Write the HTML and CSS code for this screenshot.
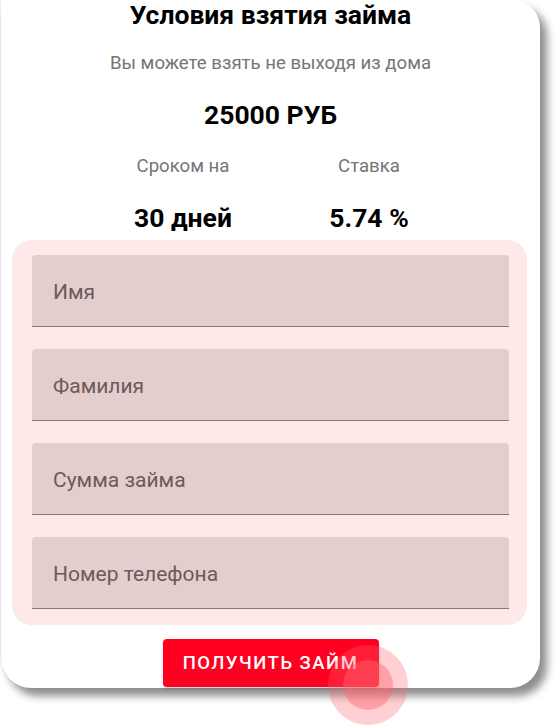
FILE: index.html
```html
<!DOCTYPE html>
<html lang="ru">
<head>
<meta charset="utf-8">
<link rel="stylesheet" href="styles.css">
</head>
<body>
<div class="card">
  <h1 class="title">Условия взятия займа</h1>
  <p class="subtitle">Вы можете взять не выходя из дома</p>
  <div class="amount">25000 РУБ</div>
  <div class="stats">
    <div class="stat">
      <div class="stat-label">Сроком на</div>
      <div class="stat-value">30 дней</div>
    </div>
    <div class="stat">
      <div class="stat-label">Ставка</div>
      <div class="stat-value">5.74 %</div>
    </div>
  </div>
  <form class="panel">
    <div class="field"><span class="placeholder">Имя</span></div>
    <div class="field"><span class="placeholder">Фамилия</span></div>
    <div class="field"><span class="placeholder">Сумма займа</span></div>
    <div class="field"><span class="placeholder">Номер телефона</span></div>
  </form>
  <div class="actions">
    <button type="button" class="btn">Получить займ</button>
    <span class="ripple"><span class="ripple-inner"></span></span>
  </div>
</div>
</body>
</html>
```
FILE: styles.css
```css
html, body {
  margin: 0;
  padding: 0;
  background: #ffffff;
}
body {
  font-family: Roboto, "Noto Sans", sans-serif;
  height: 725px;
  overflow: hidden;
}
.card {
  width: 539px;
  margin: 0 0 0 1px;
  padding: 0 0 1px;
  box-sizing: border-box;
  background: #ffffff;
  border-radius: 0 27px 30px 30px;
  box-shadow: 7px 8px 8px rgba(0, 0, 0, 0.45), -1px 0 1px rgba(0, 0, 0, 0.08);
  display: flex;
  flex-direction: column;
  align-items: center;
}
.title {
  margin: 0;
  padding-top: 1px;
  font-size: 26.5px;
  line-height: 28px;
  font-weight: 700;
  color: #000;
}
.subtitle {
  margin: 22px 0 0;
  font-size: 18.6px;
  line-height: 24px;
  color: #757575;
}
.amount {
  margin-top: 26px;
  font-size: 26.5px;
  line-height: 28px;
  font-weight: 700;
  color: #000;
}
.stats {
  margin-top: 25px;
  margin-left: 11px;
  display: grid;
  grid-template-columns: 186px 186px;
}
.stat {
  display: flex;
  flex-direction: column;
  align-items: center;
}
.stat-label {
  font-size: 18.6px;
  line-height: 24px;
  color: #757575;
}
.stat-value {
  margin-top: 26px;
  font-size: 26.5px;
  line-height: 28px;
  font-weight: 700;
  color: #000;
}
.panel {
  align-self: flex-start;
  margin: 8px 0 0 11px;
  width: 515px;
  box-sizing: border-box;
  padding: 15px 18px 16px 20px;
  background: #fee8e8;
  border-radius: 20px;
  display: flex;
  flex-direction: column;
  gap: 22px;
}
.field {
  height: 72px;
  box-sizing: border-box;
  padding: 2px 0 0 21px;
  background: #e3cdcd;
  border-radius: 4px 4px 0 0;
  border-bottom: 1.5px solid #8c7575;
  display: flex;
  align-items: center;
}
.placeholder {
  font-size: 21px;
  color: #6e5a5a;
}
.actions {
  margin-top: 14px;
  position: relative;
}
.btn {
  display: block;
  width: 216px;
  height: 48px;
  border: none;
  border-radius: 4px;
  background: #ff0020;
  color: #fff;
  font-family: Roboto, "Noto Sans", sans-serif;
  font-size: 18.5px;
  font-weight: 500;
  letter-spacing: 1.5px;
  text-transform: uppercase;
  padding: 0;
  box-shadow: 0 2px 3px rgba(0, 0, 0, 0.15);
}
.ripple {
  position: absolute;
  z-index: 2;
  left: 165px;
  top: 6px;
  width: 80px;
  height: 80px;
  border-radius: 50%;
  background: rgba(255, 100, 110, 0.3);
  display: flex;
  align-items: center;
  justify-content: center;
}
.ripple-inner {
  width: 50px;
  height: 50px;
  border-radius: 50%;
  background: rgba(255, 100, 110, 0.45);
}
```
